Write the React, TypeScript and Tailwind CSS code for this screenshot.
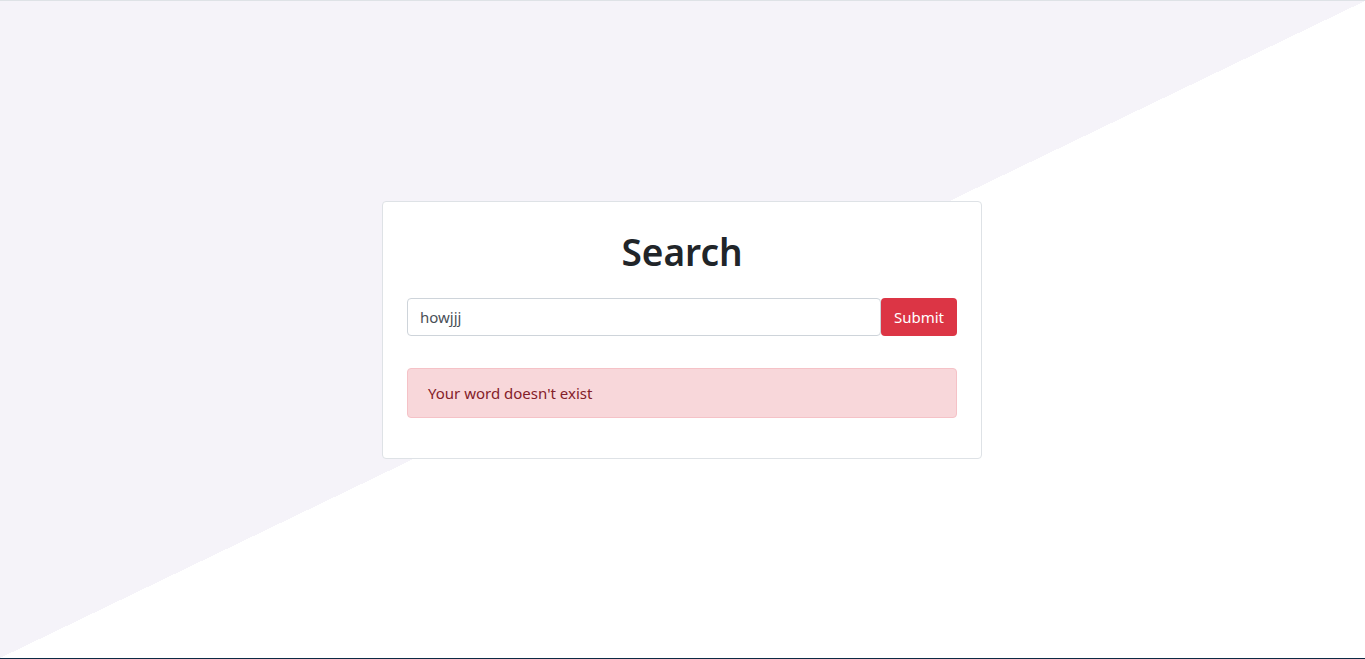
import React, { useState } from 'react';

const App: React.FC = () => {
  const [word, setWord] = useState('howjjj');

  return (
    <div
      className="h-[659px] w-full flex items-center justify-center pr-px border-t border-[#dee2e6] border-b border-b-[#0c2a44] bg-[linear-gradient(to_bottom_right,#f5f3f9_50%,#ffffff_50%)]"
      style={{ fontFamily: '"Noto Sans", "Open Sans", sans-serif' }}
    >
      <div className="w-[600px] bg-white border border-[#dee2e6] rounded px-6 pt-6 pb-6">
        <h1 className="text-center text-[37px] leading-[48px] font-semibold text-[#212529] mt-0.5">Search</h1>

        {/* form */}
        <form className="flex mt-[22px]" onSubmit={(e) => e.preventDefault()}>
          <input
            type="text"
            value={word}
            onChange={(e) => setWord(e.target.value)}
            className="flex-1 h-[38px] px-3 border border-[#ced4da] rounded text-[15px] text-[#495057] outline-none"
          />
          <button type="submit" className="h-[38px] w-[76px] pt-px bg-[#dc3545] text-white text-[15px] rounded">
            Submit
          </button>
        </form>

        <div className="mt-8 mb-4 h-[50px] flex items-center pl-5 pr-5 pt-px bg-[#f8d7da] border border-[#f5c2c7] rounded text-[15px] text-[#842029]">
          Your word doesn't exist
        </div>
      </div>
    </div>
  );
};

export default App;
